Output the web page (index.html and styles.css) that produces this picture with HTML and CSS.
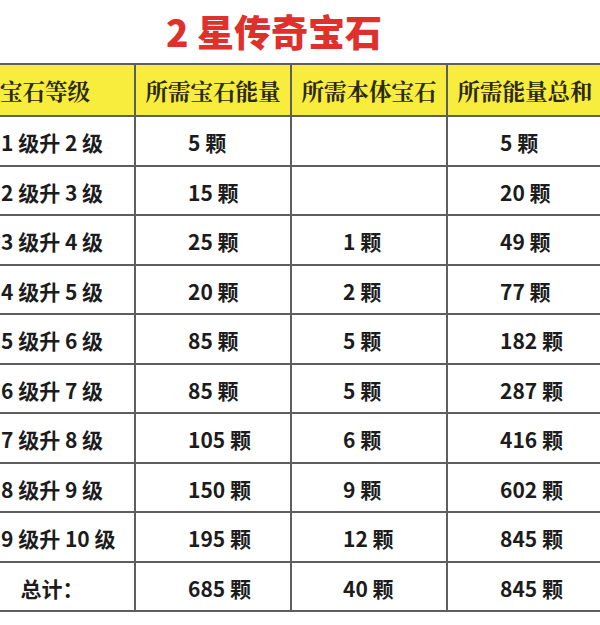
FILE: index.html
```html
<!DOCTYPE html>
<html lang="zh-CN">
<head>
<meta charset="utf-8">
<title>2 星传奇宝石</title>
<link rel="stylesheet" href="styles.css">
</head>
<body>
<div class="page">
  <h1 class="title">2 星传奇宝石</h1>
  <div class="grid">
    <div class="cell head c1">宝石等级</div>
    <div class="cell head">所需宝石能量</div>
    <div class="cell head">所需本体宝石</div>
    <div class="cell head">所需能量总和</div>

    <div class="cell c1">1 级升 2 级</div><div class="cell c2">5 颗</div><div class="cell c3"></div><div class="cell c4">5 颗</div>
    <div class="cell c1">2 级升 3 级</div><div class="cell c2">15 颗</div><div class="cell c3"></div><div class="cell c4">20 颗</div>
    <div class="cell c1">3 级升 4 级</div><div class="cell c2">25 颗</div><div class="cell c3">1 颗</div><div class="cell c4">49 颗</div>
    <div class="cell c1">4 级升 5 级</div><div class="cell c2">20 颗</div><div class="cell c3">2 颗</div><div class="cell c4">77 颗</div>
    <div class="cell c1">5 级升 6 级</div><div class="cell c2">85 颗</div><div class="cell c3">5 颗</div><div class="cell c4">182 颗</div>
    <div class="cell c1">6 级升 7 级</div><div class="cell c2">85 颗</div><div class="cell c3">5 颗</div><div class="cell c4">287 颗</div>
    <div class="cell c1">7 级升 8 级</div><div class="cell c2">105 颗</div><div class="cell c3">6 颗</div><div class="cell c4">416 颗</div>
    <div class="cell c1">8 级升 9 级</div><div class="cell c2">150 颗</div><div class="cell c3">9 颗</div><div class="cell c4">602 颗</div>
    <div class="cell c1">9 级升 10 级</div><div class="cell c2">195 颗</div><div class="cell c3">12 颗</div><div class="cell c4">845 颗</div>
    <div class="cell total">总计：</div><div class="cell c2">685 颗</div><div class="cell c3">40 颗</div><div class="cell c4">845 颗</div>
  </div>
</div>
</body>
</html>
```

FILE: styles.css
```css
html, body {
  margin: 0;
  padding: 0;
  background: #ffffff;
}

.page {
  width: 600px;
  height: 625px;
  overflow: hidden;
  position: relative;
}

.title {
  margin: 0;
  height: 63px;
  padding-left: 166px;
  box-sizing: border-box;
  font-family: "Noto Sans CJK SC", sans-serif;
  font-weight: 900;
  font-size: 37px;
  line-height: 63px;
  color: #e0302c;
  letter-spacing: 0;
  white-space: nowrap;
}

.grid {
  margin-left: -32px;
  width: 634px;
  box-sizing: border-box;
  display: grid;
  grid-template-columns: 164px 154px 154px 154px;
  grid-template-rows: 50px repeat(10, 47.5px);
  gap: 2px;
  padding: 2px;
  background: #5e5e5e;
}

.cell {
  background: #ffffff;
  display: flex;
  align-items: center;
  font-family: "Noto Sans CJK SC", sans-serif;
  font-weight: 700;
  font-size: 21px;
  color: #1c1c1c;
  white-space: nowrap;
  padding-top: 3px;
  box-sizing: border-box;
}

.head {
  background: #f8ec3c;
  justify-content: center;
  font-family: "Noto Serif CJK SC", "Noto Sans CJK SC", serif;
  font-weight: 700;
  font-size: 22.5px;
  color: #2b2a10;
  padding-top: 0;
}

.head.c1 {
  justify-content: flex-start;
  padding-left: 30px;
}

.c1 {
  padding-left: 31px;
}

.c2 {
  padding-left: 52px;
}

.c3 {
  padding-left: 51px;
}

.c4 {
  padding-left: 52px;
}

.total {
  justify-content: center;
  padding-left: 0;
}
```
